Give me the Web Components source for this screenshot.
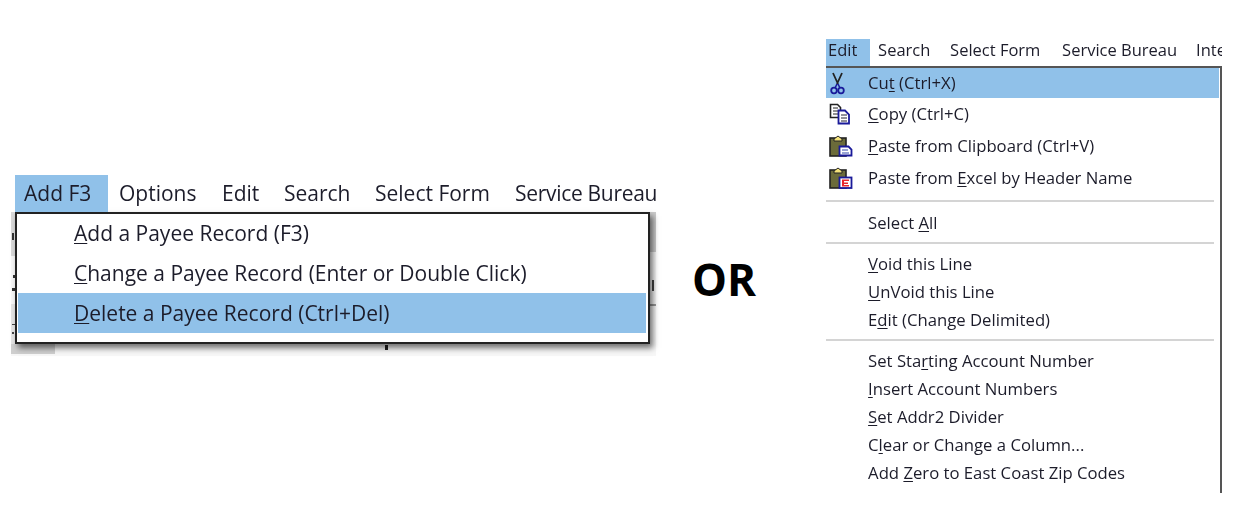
<!DOCTYPE html>
<html>
<head>
<meta charset="utf-8">
<title>Menus</title>
<style>
    html, body { margin: 0; background: #fff; }
    body { font-family: "Open Sans", "Noto Sans", sans-serif; color: #1c1c2a; }
    u { text-underline-offset: 2px; text-decoration-thickness: 1px; }
</style>
</head>
<body>
<menu-page>
    <menu-window slot="left" variant="large">
        <menu-title slot="bar" active w="93" pad="9">Add F3</menu-title>
        <menu-title slot="bar" w="103" pad="11">Options</menu-title>
        <menu-title slot="bar" w="73" pad="11">Edit</menu-title>
        <menu-title slot="bar" w="91" pad="0">Search</menu-title>
        <menu-title slot="bar" w="140" pad="0">Select Form</menu-title>
        <menu-title slot="bar" w="142" pad="0" style="letter-spacing:-.3px">Service Bureau</menu-title>
        <menu-row h="39"><u>A</u>dd a Payee Record (F3)</menu-row>
        <menu-row><u>C</u>hange a Payee Record (Enter or Double Click)</menu-row>
        <menu-row active><u>D</u>elete a Payee Record (Ctrl+Del)</menu-row>
    </menu-window>
    <or-label slot="middle">OR</or-label>
    <menu-window slot="right" variant="small">
        <menu-title slot="bar" active w="44" pad="2">Edit</menu-title>
        <menu-title slot="bar" w="72" pad="8">Search</menu-title>
        <menu-title slot="bar" w="120" pad="8">Select Form</menu-title>
        <menu-title slot="bar" w="134" pad="0">Service Bureau</menu-title>
        <menu-title slot="bar" w="32" pad="0">Inte</menu-title>

        <menu-row active h="30"><menu-icon slot="icon" name="cut"></menu-icon>Cu<u>t</u> (Ctrl+X)</menu-row>
        <menu-row h="32"><menu-icon slot="icon" name="copy"></menu-icon><u>C</u>opy (Ctrl+C)</menu-row>
        <menu-row h="32"><menu-icon slot="icon" name="paste"></menu-icon><u>P</u>aste from Clipboard (Ctrl+V)</menu-row>
        <menu-row h="32"><menu-icon slot="icon" name="excel"></menu-icon>Paste from <u>E</u>xcel by Header Name</menu-row>
        <menu-sep style="margin-top:6px;margin-bottom:7px"></menu-sep>
        <menu-row h="28">Select <u>A</u>ll</menu-row>
        <menu-sep></menu-sep>
        <menu-row h="28"><u>V</u>oid this Line</menu-row>
        <menu-row h="28"><u>U</u>nVoid this Line</menu-row>
        <menu-row h="28">E<u>d</u>it (Change Delimited)</menu-row>
        <menu-sep></menu-sep>
        <menu-row h="28">Set Sta<u>r</u>ting Account Number</menu-row>
        <menu-row h="28"><u>I</u>nsert Account Numbers</menu-row>
        <menu-row h="28"><u>S</u>et Addr2 Divider</menu-row>
        <menu-row h="28">C<u>l</u>ear or Change a Column...</menu-row>
        <menu-row h="28">Add <u>Z</u>ero to East Coast Zip Codes</menu-row>
    </menu-window>
</menu-page>

<script>
const HILITE = '#90c1e9';

const ICONS = {
    cut: `<svg width="22" height="24" viewBox="0 0 22 24" fill="none">
            <g transform="translate(-2 0)">
            <path d="M6 2l5 11M15 2l-5 11" stroke="#222" stroke-width="1.800"/>
            <path d="M10 13l-2 4M11 13l2 4" stroke="#1a1a9a" stroke-width="1.600"/>
            <circle cx="7" cy="19.500" r="2.800" stroke="#1a1a9a" stroke-width="1.800"/>
            <circle cx="14" cy="19.500" r="2.800" stroke="#1a1a9a" stroke-width="1.800"/>
            </g>
        </svg>`,
    copy: `<svg width="22" height="22" viewBox="0 0 22 22" fill="none">
            <path d="M1.500 1.500h7l3 3v10h-10z" fill="#fff" stroke="#222" stroke-width="1.600"/>
            <path d="M4 5h5M4 8h5M4 11h5" stroke="#222"/>
            <path d="M9.500 7.500h6.500l4 4v9h-10.500z" fill="#fff" stroke="#1a1a9a" stroke-width="1.800"/>
            <path d="M12 12h6M12 15h6M12 18h6" stroke="#223"/>
        </svg>`,
    paste: `<svg width="24" height="22" viewBox="0 0 24 22" fill="none">
            <rect x="1" y="3" width="16" height="18" fill="#6b6b3a" stroke="#222" stroke-width="1.600"/>
            <path d="M5 4l4-3 4 3v2h-8z" fill="#f4e27a" stroke="#222"/>
            <path d="M10.500 11.500h9l3 3v6h-12z" fill="#fff" stroke="#1a1a9a" stroke-width="1.800"/>
            <path d="M13 15h6M13 18h7" stroke="#7a86c8" stroke-width="1.500"/>
        </svg>`,
    excel: `<svg width="24" height="22" viewBox="0 0 24 22" fill="none">
            <rect x="1" y="3" width="16" height="18" fill="#6b6b3a" stroke="#222" stroke-width="1.600"/>
            <path d="M5 4l4-3 4 3v2h-8z" fill="#f4e27a" stroke="#222"/>
            <rect x="10.500" y="10.500" width="12" height="10.500" fill="#fff" stroke="#1a1a9a" stroke-width="1.800"/>
            <path d="M13 12.500h7v1.500h-5v1.500h4v1.500h-4v1h5v1.500h-7z" fill="#e8262c"/>
        </svg>`
};

class MenuPage extends HTMLElement {
    constructor() {
        super();
        this.attachShadow({mode: 'open'}).innerHTML = `
            <style>
                :host { display: flex; align-items: flex-start; width: 1235px; height: 516px; overflow: hidden; }
                .left { margin: 175px 0 0 11px; }
                .middle { margin: 251px 0 0 36px; }
                .right { margin: 39px 0 0 70px; }
            </style>
            <div class="left"><slot name="left"></slot></div>
            <div class="middle"><slot name="middle"></slot></div>
            <div class="right"><slot name="right"></slot></div>
        `;
    }
}

class MenuWindow extends HTMLElement {
    constructor() {
        super();
        this.attachShadow({mode: 'open'}).innerHTML = `
            <style>
                :host { display: block; filter: blur(.3px); }
                :host([variant="large"]) { width: 645px; font-size: 21px; --title-size: 21px; --row-pad: 56px; --row-h: 40px; --text-lift: 1px; --title-lift: 2px; }
                :host([variant="small"]) { width: 396px; font-size: 16.7px; --title-size: 16.5px; --row-pad: 42px; --row-h: 28px; --text-lift: 1px; --title-lift: 7px; }
                .bar { display: flex; white-space: nowrap; }
                :host([variant="large"]) .bar { height: 37px; padding-left: 4px; }
                :host([variant="small"]) .bar { height: 27px; overflow: hidden; }

                :host([variant="large"]) .back {
                    padding: 0 6px 12px 4px;
                    background:
                        linear-gradient(#333, #333) 1px 21px / 2px 7px no-repeat,
                        linear-gradient(#333, #333) 2px 63px / 2px 3px no-repeat,
                        linear-gradient(#333, #333) 1px 76px / 3px 3px no-repeat,
                        linear-gradient(#444, #444) 1px 112px / 3px 1px no-repeat,
                        linear-gradient(#444, #444) 1px 120px / 2px 2px no-repeat,
                        linear-gradient(#222, #222) 374px 133px / 3px 5px no-repeat,
                        linear-gradient(#444, #444) 641px 68px / 2px 11px no-repeat,
                        linear-gradient(#999, #999) 639px 92px / 6px 2px no-repeat,
                        linear-gradient(#d9d9d9, #d9d9d9) 0 0 / 4px 44px no-repeat,
                        linear-gradient(#e4e4e4, #e4e4e4) 0 92px / 4px 40px no-repeat,
                        linear-gradient(#cfcfcf, #cfcfcf) 0 129px / 44px 13px no-repeat,
                        linear-gradient(#ccc, #ccc) 639px 0 / 6px 40px no-repeat,
                        #f7f7f7;
                }
                .drop { background: #fff; }
                :host([variant="large"]) .drop {
                    border: 2px solid #222;
                    padding: 0 2px 9px 1px;
                    box-shadow: 3px 4px 6px rgba(0, 0, 0, .55);
                }
                :host([variant="small"]) .drop {
                    border-top: 2px solid #555;
                    border-right: 2px solid #555;
                    height: 425px;
                    padding-right: 1px;
                    overflow: hidden;
                }
            </style>
            <div class="bar"><slot name="bar"></slot></div>
            <div class="back">
                <div class="drop"><slot></slot></div>
            </div>
        `;
    }
}

class MenuTitle extends HTMLElement {
    constructor() {
        super();
        this.attachShadow({mode: 'open'}).innerHTML = `
            <style>
                :host { display: flex; align-items: center; box-sizing: border-box; flex: none; font-size: var(--title-size); padding-bottom: var(--title-lift); }
                :host([active]) { background: ${HILITE}; }
            </style>
            <slot></slot>
        `;
    }

    connectedCallback() {
        this.style.width = this.getAttribute('w') + 'px';
        this.style.paddingLeft = this.getAttribute('pad') + 'px';
    }
}

class MenuRow extends HTMLElement {
    constructor() {
        super();
        this.attachShadow({mode: 'open'}).innerHTML = `
            <style>
                :host { display: flex; align-items: center; height: var(--row-h); white-space: nowrap; }
                :host([active]) { background: ${HILITE}; }
                .icon { flex: none; width: var(--row-pad); display: flex; padding-left: 3px; box-sizing: border-box; }
                .label { padding-bottom: var(--text-lift); }
            </style>
            <span class="icon"><slot name="icon"></slot></span>
            <span class="label"><slot></slot></span>
        `;
    }

    connectedCallback() {
        if (this.hasAttribute('h')) this.style.height = this.getAttribute('h') + 'px';
    }
}

class MenuSep extends HTMLElement {
    constructor() {
        super();
        this.attachShadow({mode: 'open'}).innerHTML = `
            <style>
                :host { display: block; height: 2px; background: #d4d4d4; margin: 5px 5px 6px 0; }
            </style>
        `;
    }
}

class MenuIcon extends HTMLElement {
    constructor() {
        super();
        this.attachShadow({mode: 'open'}).innerHTML = `
            <style>:host { display: flex; }</style>
            ${ICONS[this.getAttribute('name')]}
        `;
    }
}

class OrLabel extends HTMLElement {
    constructor() {
        super();
        this.attachShadow({mode: 'open'}).innerHTML = `
            <style>
                :host { display: block; font: 700 44px/1.3 "Open Sans", sans-serif; color: #000; }
            </style>
            <slot></slot>
        `;
    }
}

customElements.define('menu-page', MenuPage);
customElements.define('menu-window', MenuWindow);
customElements.define('menu-title', MenuTitle);
customElements.define('menu-row', MenuRow);
customElements.define('menu-sep', MenuSep);
customElements.define('menu-icon', MenuIcon);
customElements.define('or-label', OrLabel);
</script>
</body>
</html>
